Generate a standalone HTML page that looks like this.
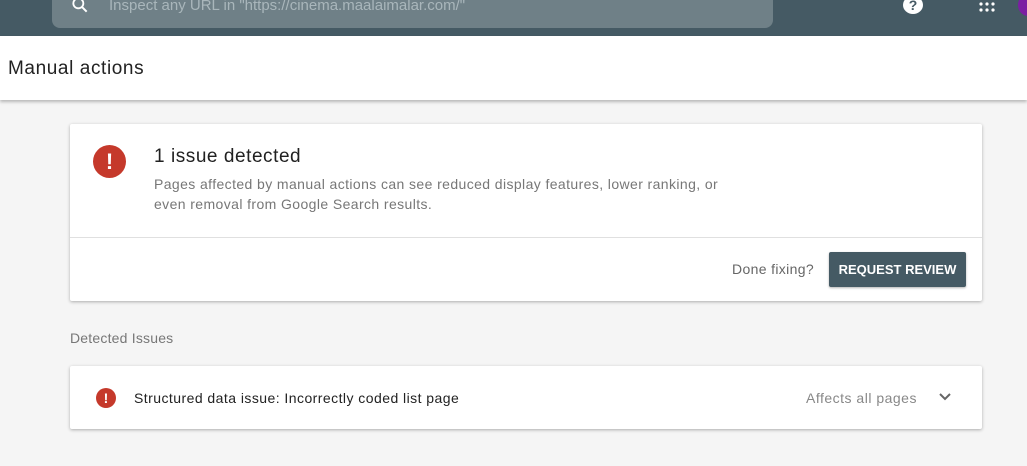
<!DOCTYPE html>
<html><head><style>
body{margin:0;width:1027px;height:466px;background:#f5f5f5;font-family:"Liberation Sans",sans-serif;overflow:hidden;position:relative}
.top{position:absolute;left:0;top:0;width:1027px;height:36px;background:#455a64}
.search{position:absolute;left:52px;top:-10px;width:721px;height:38px;background:#6f8087;border-radius:8px}
.search span{position:absolute;left:57px;top:7px;color:#a9b6bb;font-size:15px}
.hdr{position:absolute;left:0;top:36px;width:1027px;height:64px;background:#fff;box-shadow:0 2px 3px rgba(0,0,0,.25)}
.hdr span{position:absolute;left:8px;top:22px;font-size:19px;color:#222;letter-spacing:0.6px}
.card{position:absolute;left:70px;background:#fff;box-shadow:0 1px 3px rgba(0,0,0,.3);border-radius:2px}
.icon{position:absolute;border-radius:50%;background:#c5392b;color:#fff;font-weight:bold;text-align:center}
</style></head><body>
<div class="top">
<div class="search"><svg style="position:absolute;left:18px;top:5px" width="20" height="20" viewBox="0 0 24 24"><circle cx="10" cy="10" r="6" stroke="#fff" stroke-width="2.2" fill="none"/><path d="M14.5 14.5L20 20" stroke="#fff" stroke-width="2.4"/></svg><span>Inspect any URL in "https://cinema.maalaimalar.com/"</span></div>
<div style="position:absolute;left:903px;top:-4px;width:20px;height:18px;border-radius:50%;background:#fff;color:#455a64;font-size:14px;font-weight:bold;text-align:center;line-height:18px">?</div>
<svg style="position:absolute;left:979px;top:2px" width="16" height="10"><g fill="#fff"><circle cx="2" cy="2" r="1.6"/><circle cx="8" cy="2" r="1.6"/><circle cx="14" cy="2" r="1.6"/><circle cx="2" cy="8" r="1.6"/><circle cx="8" cy="8" r="1.6"/><circle cx="14" cy="8" r="1.6"/></g></svg>
<div style="position:absolute;left:1018px;top:-6px;width:20px;height:22px;border-radius:50%;background:#7b1fa2"></div>
</div>
<div class="hdr"><span>Manual actions</span></div>
<div class="card" style="top:124px;width:912px;height:177px">
<div class="icon" style="left:23px;top:21px;width:33px;height:33px;line-height:33px;font-size:22px">!</div>
<div style="position:absolute;left:84px;top:22px;font-size:19px;color:#212121;letter-spacing:0.55px">1 issue detected</div>
<div style="position:absolute;left:84px;top:50px;font-size:14px;line-height:20px;color:#777;letter-spacing:0.4px">Pages affected by manual actions can see reduced display features, lower ranking, or<br>even removal from Google Search results.</div>
<div style="position:absolute;left:0;top:113px;width:912px;border-top:1px solid #e0e0e0"></div>
<div style="position:absolute;left:662px;top:137px;font-size:14px;color:#666;letter-spacing:0.35px">Done fixing?</div>
<div style="position:absolute;left:759px;top:128px;width:137px;height:35px;background:#455a64;border-radius:2px;box-shadow:0 1px 2px rgba(0,0,0,.3);color:#fff;font-size:13px;font-weight:bold;text-align:center;line-height:35px">REQUEST REVIEW</div>
</div>
<div style="position:absolute;left:70px;top:330px;font-size:14px;color:#777;letter-spacing:0.2px">Detected Issues</div>
<div class="card" style="top:366px;width:912px;height:63px">
<div class="icon" style="left:26px;top:22px;width:20px;height:20px;line-height:20px;font-size:14px">!</div>
<div style="position:absolute;left:64px;top:24px;font-size:14px;color:#222;letter-spacing:0.45px">Structured data issue: Incorrectly coded list page</div>
<div style="position:absolute;left:736px;top:24px;font-size:14px;color:#888;letter-spacing:0.5px">Affects all pages</div>
<svg style="position:absolute;left:868px;top:26px" width="14" height="10"><path d="M2 2L7 7L12 2" stroke="#666" stroke-width="2" fill="none"/></svg>
</div>
</body></html>
